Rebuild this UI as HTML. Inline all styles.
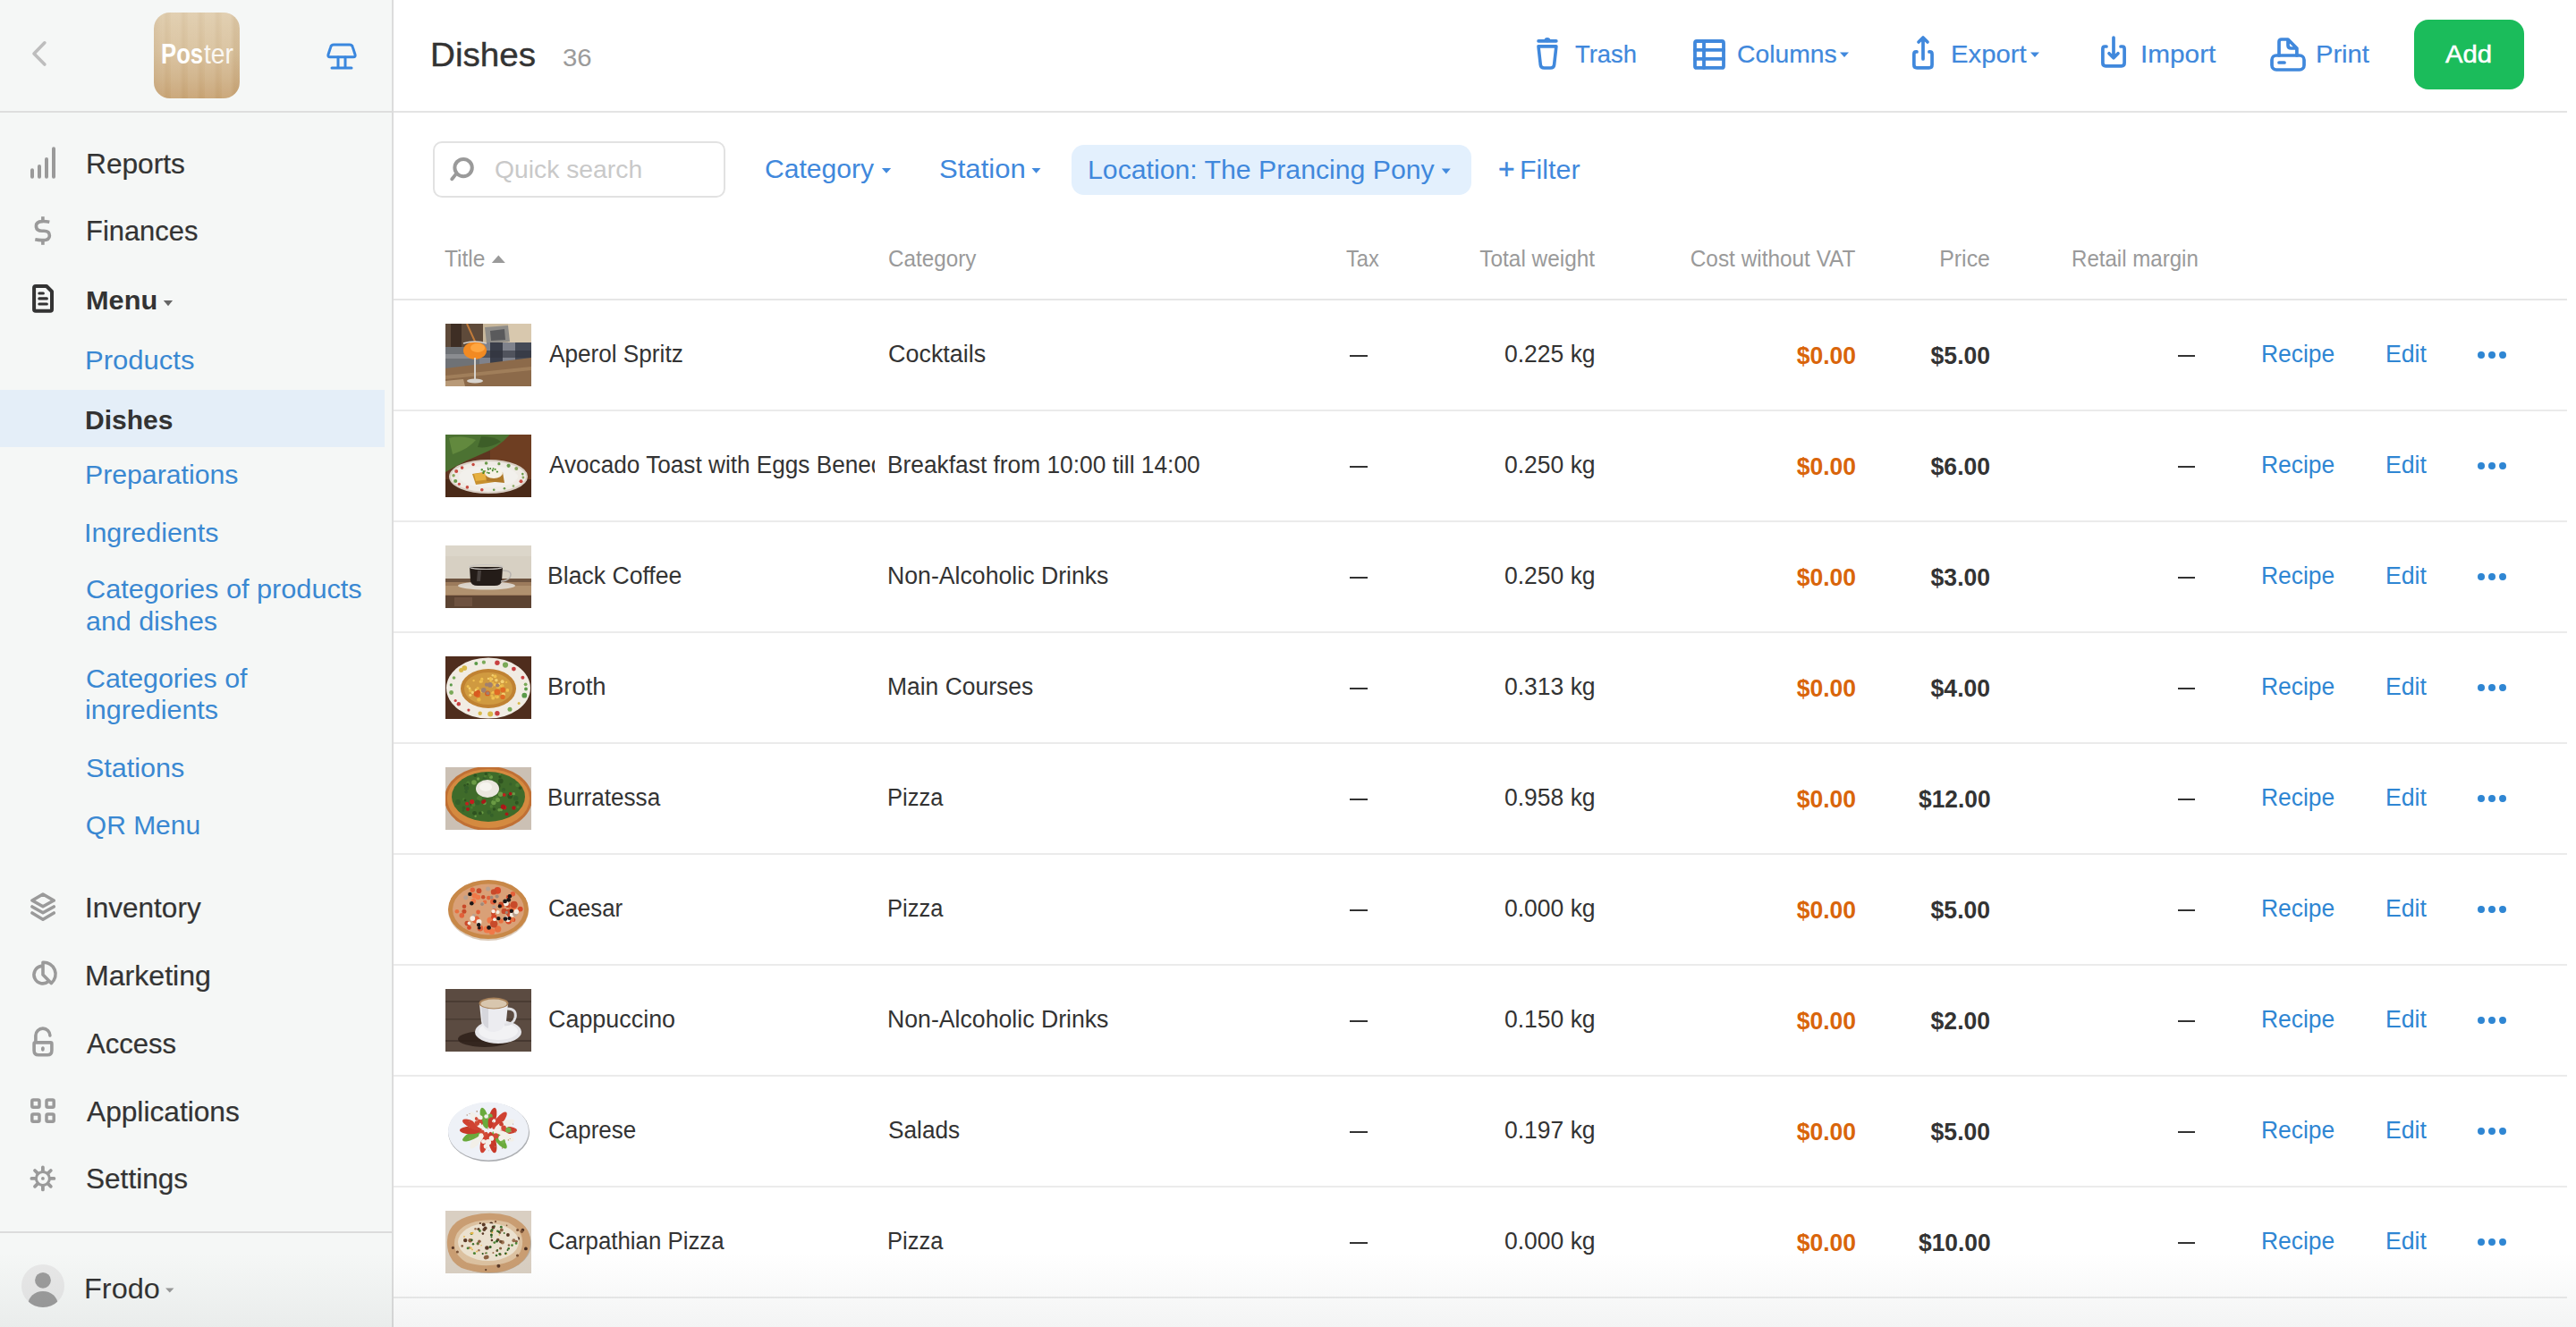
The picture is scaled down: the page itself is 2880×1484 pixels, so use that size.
<!DOCTYPE html>
<html><head><meta charset="utf-8"><title>Dishes</title>
<style>
html,body{margin:0;padding:0;background:#fff;}
body{width:2880px;height:1484px;overflow:hidden;font-family:"Liberation Sans", sans-serif;}
#page{position:relative;width:2880px;height:1484px;overflow:hidden;background:#fff;}
.t{position:absolute;white-space:nowrap;}
.r{position:absolute;}
.clip{position:absolute;overflow:hidden;}
.clip .t{position:absolute;}
svg.icons{position:absolute;left:0;top:0;width:2880px;height:1484px;}
.logo{border-radius:18px;background:
 repeating-linear-gradient(90deg, rgba(255,255,255,0.05) 0px, rgba(255,255,255,0.05) 10px, rgba(140,100,50,0.05) 14px, rgba(255,255,255,0) 19px),
 linear-gradient(90deg, rgba(150,110,60,0.10) 0%, rgba(150,110,60,0) 12%, rgba(150,110,60,0) 88%, rgba(150,110,60,0.10) 100%),
 linear-gradient(180deg,#e0cdae 0%,#d9c29e 45%,#cfb086 80%,#c8a475 100%);}
.fade{position:absolute;left:0;top:1400px;width:2880px;height:84px;background:linear-gradient(180deg,rgba(20,40,40,0) 0%,rgba(20,40,40,0.018) 40%,rgba(20,40,40,0.05) 100%);}
.th{overflow:hidden;}
.th0{background:
 radial-gradient(ellipse 9px 8px at 38% 45%, #ff9a2a 0%, #f28a20 60%, rgba(240,130,30,0) 100%),
 linear-gradient(90deg, rgba(0,0,0,0) 43%, rgba(230,230,235,0.55) 45%, rgba(230,230,235,0.55) 47%, rgba(0,0,0,0) 49%),
 linear-gradient(180deg, rgba(0,0,0,0) 0%, rgba(0,0,0,0) 75%, #a27c58 76%, #8f6c4c 100%),
 linear-gradient(90deg, rgba(0,0,0,0) 0%, rgba(0,0,0,0) 50%, #7c8494 50%, #4c5464 75%, #8a909a 100%) 0 24px / 100% 22px no-repeat,
 linear-gradient(90deg, #6d5b4b 0%, #5c4a3c 30%, #cdbda5 62%, #d4c4ac 100%) 0 0 / 100% 24px no-repeat,
 linear-gradient(180deg, #5a4a3e 0%, #5f5a56 40%, #7a6858 70%, #8c6c4e 100%);}
.th1{background:
 radial-gradient(ellipse 14px 8px at 52% 64%, #e8a838 0%, #d89a40 55%, rgba(220,160,60,0) 100%),
 radial-gradient(ellipse 44px 21px at 50% 66%, #f4f2ee 0%, #ece8e2 78%, #d8cfc6 92%, rgba(120,60,30,0) 100%),
 linear-gradient(160deg, #3f5a2c 0%, #557a3a 30%, rgba(80,100,50,0) 45%),
 linear-gradient(180deg, #5a3a22 0%, #6e4024 50%, #4e2e1c 100%);}
.th2{background:
 radial-gradient(ellipse 19px 9px at 48% 50%, #1e1814 0%, #2a211c 70%, rgba(40,30,25,0) 100%),
 radial-gradient(ellipse 34px 5px at 52% 66%, rgba(230,225,220,0.8) 0%, rgba(230,225,220,0) 100%),
 linear-gradient(180deg, #d7d0c3 0%, #cfc6b6 55%, #8c6e52 60%, #a8896a 72%, #6e543e 86%, #5a4030 100%);}
.th3{background:
 radial-gradient(ellipse 30px 21px at 50% 50%, #c88834 0%, #b8782a 55%, #c89a50 75%, rgba(200,150,80,0) 82%),
 radial-gradient(ellipse 48px 33px at 50% 50%, #f2ece4 0%, #ebe4da 85%, rgba(90,50,30,0) 100%),
 linear-gradient(180deg, #5a3422 0%, #4e2e1e 100%);}
.th4{background:
 radial-gradient(ellipse 13px 11px at 50% 45%, #f0ece4 0%, #e6e0d6 70%, rgba(200,200,190,0) 100%),
 radial-gradient(ellipse 36px 24px at 50% 46%, #4e7a30 0%, #3e6a28 60%, rgba(70,110,40,0) 100%),
 radial-gradient(ellipse 50px 34px at 50% 48%, #c8743a 0%, #c06a30 80%, rgba(190,110,60,0) 100%),
 linear-gradient(180deg, #c9bfb4 0%, #bfb2a4 100%);}
.th5{background:
 radial-gradient(ellipse 44px 31px at 50% 55%, #d89a6a 0%, #c86a40 55%, #c88848 85%, #b87838 92%, rgba(255,255,255,0) 100%),
 #ffffff;}
.th6{background:
 radial-gradient(ellipse 17px 9px at 59% 33%, #d9cbb8 0%, #c4aa88 70%, #9a7048 90%, rgba(150,110,70,0) 100%),
 radial-gradient(ellipse 17px 15px at 59% 50%, #f4f4f6 0%, #e6e6ea 70%, rgba(220,220,225,0) 100%),
 radial-gradient(ellipse 28px 14px at 56% 66%, #f0f0f2 0%, #e2e2e6 80%, rgba(200,200,205,0) 100%),
 radial-gradient(ellipse 30px 12px at 45% 78%, rgba(20,12,8,0.7) 0%, rgba(20,12,8,0) 100%),
 linear-gradient(180deg, #5e4e44 0%, #54463c 100%);}
.th7{background:
 radial-gradient(ellipse 26px 19px at 50% 56%, #c8584a 0%, #c0604a 40%, #a8b070 60%, rgba(230,230,225,0) 100%),
 radial-gradient(ellipse 46px 33px at 50% 55%, #f2f4f8 0%, #e8ecf2 85%, #c8ccd2 95%, rgba(255,255,255,0) 100%),
 #ffffff;}
.th8{background:
 radial-gradient(ellipse 40px 26px at 50% 50%, #ece4d8 0%, #e0d4c0 55%, #c89a70 78%, #9a6a48 92%, rgba(200,180,160,0) 100%),
 linear-gradient(180deg, #d6cbbd 0%, #cfc2b2 100%);}

@media (max-width: 1800px) {
 html,body{width:1440px;height:742px;}
 #page{zoom:0.5;}
}

</style></head><body>
<div id="page">
<div class="r" style="left:0px;top:0px;width:438px;height:1484px;background:#f5f7f6;"></div>
<div class="r" style="left:438px;top:0px;width:2px;height:1484px;background:#dcdcdc;"></div>
<div class="r" style="left:0px;top:124px;width:438px;height:2px;background:#dedede;"></div>
<div class="r" style="left:440px;top:124px;width:2430px;height:2px;background:#e4e4e4;"></div>
<div class="r logo" style="left:172px;top:14px;width:96px;height:96px;"></div>
<div class="t" style="left:180.17px;transform-origin:0 0;top:41.02px;font-size:30.5px;line-height:38px;color:#fff;font-weight:700;transform:scaleX(0.8422);">Pos</div>
<div class="t" style="left:228.29px;transform-origin:0 0;top:41.02px;font-size:30.5px;line-height:38px;color:rgba(255,255,255,0.9);transform:scaleX(0.9249);font-weight:300;">ter</div>
<div class="t" style="left:95.95px;transform-origin:0 0;top:163.72px;font-size:30.5px;line-height:38px;color:#333333;transform:scaleX(1.0388);-webkit-text-stroke:0.2px #333;">Reports</div>
<div class="t" style="left:96.02px;transform-origin:0 0;top:239.32px;font-size:30.5px;line-height:38px;color:#333333;transform:scaleX(1.0133);-webkit-text-stroke:0.2px #333;">Finances</div>
<div class="t" style="left:95.87px;transform-origin:0 0;top:317.07px;font-size:29.5px;line-height:37px;color:#333333;font-weight:700;transform:scaleX(1.0410);">Menu</div>
<div class="r" style="left:0px;top:436px;width:430px;height:64px;background:#e4eef8;"></div>
<div class="t" style="left:94.62px;transform-origin:0 0;top:384.20px;font-size:30px;line-height:38px;color:#3a88d2;transform:scaleX(1.0340);">Products</div>
<div class="t" style="left:94.68px;transform-origin:0 0;top:512.30px;font-size:30px;line-height:38px;color:#3a88d2;transform:scaleX(1.0078);">Preparations</div>
<div class="t" style="left:94.36px;transform-origin:0 0;top:576.60px;font-size:30px;line-height:38px;color:#3a88d2;transform:scaleX(1.0131);">Ingredients</div>
<div class="t" style="left:95.67px;transform-origin:0 0;top:639.90px;font-size:30px;line-height:38px;color:#3a88d2;transform:scaleX(1.0227);">Categories of products</div>
<div class="t" style="left:95.88px;transform-origin:0 0;top:675.70px;font-size:30px;line-height:38px;color:#3a88d2;transform:scaleX(1.0133);">and dishes</div>
<div class="t" style="left:95.68px;transform-origin:0 0;top:739.50px;font-size:30px;line-height:38px;color:#3a88d2;transform:scaleX(1.0113);">Categories of</div>
<div class="t" style="left:95.17px;transform-origin:0 0;top:775.30px;font-size:30px;line-height:38px;color:#3a88d2;transform:scaleX(1.0153);">ingredients</div>
<div class="t" style="left:95.77px;transform-origin:0 0;top:839.80px;font-size:30px;line-height:38px;color:#3a88d2;transform:scaleX(1.0179);">Stations</div>
<div class="t" style="left:95.80px;transform-origin:0 0;top:904.10px;font-size:30px;line-height:38px;color:#3a88d2;">QR Menu</div>
<div class="t" style="left:95.11px;transform-origin:0 0;top:451.37px;font-size:29.5px;line-height:37px;color:#333333;font-weight:700;transform:scaleX(1.0171);">Dishes</div>
<div class="t" style="left:94.55px;transform-origin:0 0;top:996.02px;font-size:30.5px;line-height:38px;color:#333333;transform:scaleX(1.0334);-webkit-text-stroke:0.2px #333;">Inventory</div>
<div class="t" style="left:94.82px;transform-origin:0 0;top:1071.92px;font-size:30.5px;line-height:38px;color:#333333;transform:scaleX(1.0526);-webkit-text-stroke:0.2px #333;">Marketing</div>
<div class="t" style="left:97.35px;transform-origin:0 0;top:1147.92px;font-size:30.5px;line-height:38px;color:#333333;transform:scaleX(1.0185);-webkit-text-stroke:0.2px #333;">Access</div>
<div class="t" style="left:97.34px;transform-origin:0 0;top:1223.92px;font-size:30.5px;line-height:38px;color:#333333;transform:scaleX(1.0386);-webkit-text-stroke:0.2px #333;">Applications</div>
<div class="t" style="left:96.00px;transform-origin:0 0;top:1299.12px;font-size:30.5px;line-height:38px;color:#333333;transform:scaleX(1.0353);-webkit-text-stroke:0.2px #333;">Settings</div>
<div class="r" style="left:0px;top:1377px;width:438px;height:2px;background:#dcdcdc;"></div>
<div class="t" style="left:93.58px;transform-origin:0 0;top:1421.75px;font-size:31px;line-height:39px;color:#333333;transform:scaleX(1.0480);">Frodo</div>
<div class="t" style="left:481.20px;transform-origin:0 0;top:39.45px;font-size:36.2px;line-height:45px;color:#333333;transform:scaleX(1.0667);-webkit-text-stroke:0.4px #333;">Dishes</div>
<div class="t" style="left:628.85px;transform-origin:0 0;top:46.79px;font-size:28px;line-height:35px;color:#9b9b9b;transform:scaleX(1.0484);">36</div>
<div class="t" style="left:1761.41px;transform-origin:0 0;top:43.09px;font-size:28px;line-height:35px;color:#4088dc;transform:scaleX(0.9765);-webkit-text-stroke:0.2px #4088dc;">Trash</div>
<div class="t" style="left:1941.98px;transform-origin:0 0;top:43.09px;font-size:28px;line-height:35px;color:#4088dc;transform:scaleX(1.0111);-webkit-text-stroke:0.2px #4088dc;">Columns</div>
<div class="t" style="left:2180.59px;transform-origin:0 0;top:43.09px;font-size:28px;line-height:35px;color:#4088dc;transform:scaleX(1.0459);-webkit-text-stroke:0.2px #4088dc;">Export</div>
<div class="t" style="left:2392.84px;transform-origin:0 0;top:43.09px;font-size:28px;line-height:35px;color:#4088dc;transform:scaleX(1.0627);-webkit-text-stroke:0.2px #4088dc;">Import</div>
<div class="t" style="left:2589.31px;transform-origin:0 0;top:43.09px;font-size:28px;line-height:35px;color:#4088dc;transform:scaleX(1.0399);-webkit-text-stroke:0.2px #4088dc;">Print</div>
<div class="r" style="left:2699px;top:22px;width:123px;height:78px;background:#1bbc5b;border-radius:16px;"></div>
<div class="t" style="left:2734.44px;transform-origin:0 0;top:44.06px;font-size:27.5px;line-height:34px;color:#ffffff;transform:scaleX(1.0638);-webkit-text-stroke:0.5px #fff;">Add</div>
<div class="r" style="left:484px;top:158px;width:327px;height:63px;border:2px solid #e2e2e2;border-radius:10px;box-sizing:border-box;background:#fff;"></div>
<div class="t" style="left:553.19px;transform-origin:0 0;top:172.49px;font-size:28px;line-height:35px;color:#c9c9c9;transform:scaleX(1.0106);">Quick search</div>
<div class="t" style="left:855.10px;transform-origin:0 0;top:170.30px;font-size:30px;line-height:38px;color:#4088dc;transform:scaleX(1.0025);">Category</div>
<div class="t" style="left:1049.95px;transform-origin:0 0;top:170.30px;font-size:30px;line-height:38px;color:#4088dc;transform:scaleX(1.0356);">Station</div>
<div class="r" style="left:1198px;top:162px;width:447px;height:56px;background:#e3f0fd;border-radius:14px;"></div>
<div class="t" style="left:1215.98px;transform-origin:0 0;top:170.60px;font-size:30px;line-height:38px;color:#4088dc;transform:scaleX(1.0079);">Location: The Prancing Pony</div>
<div class="t" style="left:1674.81px;transform-origin:0 0;top:169.40px;font-size:32px;line-height:40px;color:#4088dc;transform:scaleX(0.9935);-webkit-text-stroke:0.4px #4088dc;">+</div>
<div class="t" style="left:1699.16px;transform-origin:0 0;top:170.60px;font-size:30px;line-height:38px;color:#4088dc;transform:scaleX(1.0141);">Filter</div>
<div class="t" style="left:497.41px;transform-origin:0 0;top:274.33px;font-size:25px;line-height:31px;color:#9a9a9a;transform:scaleX(0.9821);">Title</div>
<div class="t" style="left:992.74px;transform-origin:0 0;top:274.33px;font-size:25px;line-height:31px;color:#9a9a9a;transform:scaleX(0.9700);">Category</div>
<div class="t" style="left:1505.43px;transform-origin:0 0;top:274.33px;font-size:25px;line-height:31px;color:#9a9a9a;transform:scaleX(0.9474);">Tax</div>
<div class="t" style="right:1097.39px;transform-origin:100% 0;top:274.33px;font-size:25px;line-height:31px;color:#9a9a9a;transform:scaleX(0.9749);">Total weight</div>
<div class="t" style="right:805.60px;transform-origin:100% 0;top:274.33px;font-size:25px;line-height:31px;color:#9a9a9a;transform:scaleX(0.9749);">Cost without VAT</div>
<div class="t" style="right:654.65px;transform-origin:100% 0;top:274.33px;font-size:25px;line-height:31px;color:#9a9a9a;transform:scaleX(0.9963);">Price</div>
<div class="t" style="left:2315.87px;transform-origin:0 0;top:274.33px;font-size:25px;line-height:31px;color:#9a9a9a;transform:scaleX(0.9631);">Retail margin</div>
<div class="r" style="left:440px;top:334px;width:2430px;height:2px;background:#e6e6e6;"></div>
<div class="r th" style="left:498px;top:362px;width:96px;height:70px;"><svg width="96" height="70" viewBox="0 0 96 70"><rect width="96" height="70" fill="#4d3d31"/>
<rect x="0" y="0" width="42" height="26" fill="#5e4a3a"/><rect x="6" y="0" width="12" height="30" fill="#3e2e24"/>
<rect x="42" y="0" width="54" height="22" fill="#c9b89c"/><rect x="70" y="0" width="26" height="22" fill="#d8c8ae"/>
<path d="M44,4 L70,2 L72,20 L46,22 Z" fill="#8e8c88"/><path d="M50,8 L66,6 L67,18 L51,19 Z" fill="#5a5a5c"/>
<rect x="36" y="21" width="60" height="26" fill="#7f828c"/>
<rect x="50" y="21" width="14" height="26" fill="#3a3e4a"/><rect x="78" y="21" width="18" height="26" fill="#454a56"/>
<rect x="36" y="30" width="60" height="8" fill="#30343e" opacity="0.6"/>
<rect x="0" y="26" width="38" height="24" fill="#6f7276"/><rect x="0" y="34" width="30" height="5" fill="#8a8c90"/>
<path d="M0,50 L96,38 L96,70 L0,70 Z" fill="#8c6a4a"/><path d="M0,58 L96,48 L96,52 L0,62 Z" fill="#a07e5a"/>
<path d="M0,64 L20,62 L22,70 L0,70 Z" fill="#b89a78"/>
<line x1="24" y1="0" x2="34" y2="22" stroke="#c07a3a" stroke-width="2"/>
<ellipse cx="33" cy="30" rx="13" ry="10" fill="#f28a22"/><ellipse cx="36" cy="27" rx="8" ry="5" fill="#ffa640"/>
<path d="M20,22 Q33,18 46,22" stroke="#d8d0c8" stroke-width="1.5" fill="none"/>
<rect x="32" y="38" width="2" height="25" fill="#d6d2cc"/><ellipse cx="33" cy="64" rx="9" ry="2.5" fill="#d8d4ce"/></svg></div>
<div class="clip" style="left:600px;top:362px;width:378px;height:70px;">
<div class="t" style="left:14.20px;transform-origin:0 0;top:16.84px;font-size:27px;line-height:34px;color:#333333;transform:scaleX(0.9687);">Aperol Spritz</div>
</div>
<div class="t" style="left:992.80px;transform-origin:0 0;top:378.84px;font-size:27px;line-height:34px;color:#333333;transform:scaleX(0.9972);">Cocktails</div>
<div class="r" style="left:1509px;top:396.7px;width:20px;height:2.1999999999999886px;background:#333333;"></div>
<div class="t" style="right:1096.35px;transform-origin:100% 0;top:378.84px;font-size:27px;line-height:34px;color:#333333;transform:scaleX(0.9802);">0.225 kg</div>
<div class="t" style="right:804.99px;transform-origin:100% 0;top:380.09px;font-size:28px;line-height:35px;color:#d9650b;font-weight:700;transform:scaleX(0.9474);">$0.00</div>
<div class="t" style="right:654.59px;transform-origin:100% 0;top:380.09px;font-size:28px;line-height:35px;color:#333333;font-weight:700;transform:scaleX(0.9489);">$5.00</div>
<div class="r" style="left:2435px;top:396.7px;width:19px;height:2.1999999999999886px;background:#333333;"></div>
<div class="t" style="left:2528.15px;transform-origin:0 0;top:378.84px;font-size:27px;line-height:34px;color:#2f86d3;transform:scaleX(0.9789);">Recipe</div>
<div class="t" style="left:2667.33px;transform-origin:0 0;top:378.84px;font-size:27px;line-height:34px;color:#2f86d3;transform:scaleX(0.9864);">Edit</div>
<div class="r" style="left:2770.3px;top:393.3px;width:7.8px;height:7.8px;border-radius:50%;background:#2f86d3;"></div>
<div class="r" style="left:2782.3px;top:393.3px;width:7.8px;height:7.8px;border-radius:50%;background:#2f86d3;"></div>
<div class="r" style="left:2794.3px;top:393.3px;width:7.8px;height:7.8px;border-radius:50%;background:#2f86d3;"></div>
<div class="r" style="left:440px;top:458px;width:2430px;height:2px;background:#ebebeb;"></div>
<div class="r th" style="left:498px;top:486px;width:96px;height:70px;"><svg width="96" height="70" viewBox="0 0 96 70"><rect width="96" height="70" fill="#5e3520"/><rect x="50" y="0" width="46" height="70" fill="#6e3e22"/>
<rect x="0" y="50" width="96" height="20" fill="#4a2a18"/>
<path d="M0,0 L72,0 Q60,14 40,22 Q20,30 0,42 Z" fill="#4c7232"/>
<path d="M4,4 Q20,0 34,6 Q26,16 8,22 Z" fill="#62893e"/><path d="M40,2 Q56,2 62,8 Q48,16 36,14 Z" fill="#3d5e28"/>
<ellipse cx="48" cy="47" rx="43" ry="18" fill="#efebe5"/>
<ellipse cx="48" cy="47" rx="43" ry="18" fill="none" stroke="#d9cfc4" stroke-width="2"/>
<circle cx="86.9" cy="48.0" r="1.4" fill="#8aa860"/><circle cx="84.5" cy="52.3" r="2.0" fill="#c84a40"/><circle cx="76.0" cy="57.5" r="1.3" fill="#8aa860"/><circle cx="66.0" cy="60.3" r="1.3" fill="#6a9a4a"/><circle cx="54.2" cy="61.8" r="1.3" fill="#6a9a4a"/><circle cx="40.8" cy="61.7" r="1.8" fill="#c84a40"/><circle cx="24.4" cy="58.9" r="1.8" fill="#c84a40"/><circle cx="15.4" cy="55.3" r="1.6" fill="#c84a40"/><circle cx="11.2" cy="52.0" r="2.1" fill="#6a9a4a"/><circle cx="9.1" cy="45.7" r="1.7" fill="#8aa860"/><circle cx="12.2" cy="41.0" r="2.0" fill="#c84a40"/><circle cx="18.6" cy="37.1" r="1.8" fill="#c84a40"/><circle cx="31.1" cy="33.5" r="1.7" fill="#c84a40"/><circle cx="45.6" cy="32.0" r="1.8" fill="#6a9a4a"/><circle cx="59.9" cy="32.7" r="1.6" fill="#6a9a4a"/><circle cx="70.6" cy="34.8" r="2.1" fill="#6a9a4a"/><circle cx="79.3" cy="38.1" r="2.0" fill="#8aa860"/><circle cx="86.3" cy="44.1" r="1.3" fill="#6a9a4a"/>
<ellipse cx="48" cy="47" rx="33" ry="12" fill="#f2f0ec"/>
<path d="M30,44 L56,40 L62,52 L34,56 Z" fill="#c8902e"/><path d="M32,44 L54,41 L58,49 L34,52 Z" fill="#e6b040"/>
<path d="M44,40 L64,42 L66,54 L46,52 Z" fill="#b07a2a"/>
<ellipse cx="54" cy="43" rx="10" ry="6" fill="#f6f2e6"/>
<circle cx="40.8" cy="39.3" r="1.2" fill="#5a9a3a"/><circle cx="47.9" cy="39.1" r="1.0" fill="#3c7a2a"/><circle cx="50.2" cy="38.1" r="1.0" fill="#3c7a2a"/><circle cx="52.7" cy="39.7" r="1.0" fill="#5a9a3a"/><circle cx="46.8" cy="42.5" r="1.0" fill="#5a9a3a"/><circle cx="52.8" cy="40.6" r="0.8" fill="#3c7a2a"/><circle cx="57.8" cy="41.6" r="1.1" fill="#5a9a3a"/><circle cx="48.7" cy="43.0" r="1.1" fill="#3c7a2a"/><circle cx="55.6" cy="38.9" r="1.1" fill="#5a9a3a"/><circle cx="58.2" cy="41.6" r="0.7" fill="#3c7a2a"/><circle cx="42.3" cy="42.9" r="1.0" fill="#3c7a2a"/><circle cx="43.0" cy="41.2" r="1.3" fill="#5a9a3a"/><circle cx="53.5" cy="38.0" r="0.9" fill="#5a9a3a"/><circle cx="47.5" cy="37.2" r="0.8" fill="#3c7a2a"/></svg></div>
<div class="clip" style="left:600px;top:486px;width:378px;height:70px;">
<div class="t" style="left:14.20px;transform-origin:0 0;top:16.84px;font-size:27px;line-height:34px;color:#333333;transform:scaleX(0.9692);">Avocado Toast with Eggs Benedict</div>
</div>
<div class="t" style="left:992.06px;transform-origin:0 0;top:502.84px;font-size:27px;line-height:34px;color:#333333;transform:scaleX(0.9750);">Breakfast from 10:00 till 14:00</div>
<div class="r" style="left:1509px;top:520.7px;width:20px;height:2.199999999999932px;background:#333333;"></div>
<div class="t" style="right:1096.35px;transform-origin:100% 0;top:502.84px;font-size:27px;line-height:34px;color:#333333;transform:scaleX(0.9802);">0.250 kg</div>
<div class="t" style="right:804.99px;transform-origin:100% 0;top:504.09px;font-size:28px;line-height:35px;color:#d9650b;font-weight:700;transform:scaleX(0.9474);">$0.00</div>
<div class="t" style="right:654.59px;transform-origin:100% 0;top:504.09px;font-size:28px;line-height:35px;color:#333333;font-weight:700;transform:scaleX(0.9489);">$6.00</div>
<div class="r" style="left:2435px;top:520.7px;width:19px;height:2.199999999999932px;background:#333333;"></div>
<div class="t" style="left:2528.15px;transform-origin:0 0;top:502.84px;font-size:27px;line-height:34px;color:#2f86d3;transform:scaleX(0.9789);">Recipe</div>
<div class="t" style="left:2667.33px;transform-origin:0 0;top:502.84px;font-size:27px;line-height:34px;color:#2f86d3;transform:scaleX(0.9864);">Edit</div>
<div class="r" style="left:2770.3px;top:517.3px;width:7.8px;height:7.8px;border-radius:50%;background:#2f86d3;"></div>
<div class="r" style="left:2782.3px;top:517.3px;width:7.8px;height:7.8px;border-radius:50%;background:#2f86d3;"></div>
<div class="r" style="left:2794.3px;top:517.3px;width:7.8px;height:7.8px;border-radius:50%;background:#2f86d3;"></div>
<div class="r" style="left:440px;top:582px;width:2430px;height:2px;background:#ebebeb;"></div>
<div class="r th" style="left:498px;top:610px;width:96px;height:70px;"><svg width="96" height="70" viewBox="0 0 96 70"><rect width="96" height="70" fill="#d7d0c3"/>
<rect x="0" y="0" width="96" height="12" fill="#dcd6ca"/>
<rect x="0" y="37" width="96" height="33" fill="#9c7b5c"/>
<rect x="0" y="37" width="96" height="4" fill="#6e5440"/>
<rect x="0" y="45" width="96" height="10" fill="#b0916f"/>
<rect x="0" y="56" width="96" height="14" fill="#5c4332"/><rect x="10" y="58" width="20" height="10" fill="#6e5240"/>
<ellipse cx="46" cy="45" rx="32" ry="4.5" fill="#e4e0da" opacity="0.85"/>
<path d="M27,24 L64,24 L63,40 Q62,45 55,45 L36,45 Q29,45 28,40 Z" fill="#241c18"/>
<ellipse cx="45.5" cy="24" rx="18.5" ry="2.5" fill="none" stroke="#c8c4c0" stroke-width="1.2"/>
<path d="M64,28 Q76,28 72,36 Q68,40 62,40" fill="none" stroke="#b8b4b0" stroke-width="1.5"/>
<path d="M36,28 L40,28 L39,40 L35,40 Z" fill="#5a5350" opacity="0.7"/></svg></div>
<div class="clip" style="left:600px;top:610px;width:378px;height:70px;">
<div class="t" style="left:12.13px;transform-origin:0 0;top:16.84px;font-size:27px;line-height:34px;color:#333333;transform:scaleX(0.9853);">Black Coffee</div>
</div>
<div class="t" style="left:992.03px;transform-origin:0 0;top:626.84px;font-size:27px;line-height:34px;color:#333333;transform:scaleX(0.9875);">Non-Alcoholic Drinks</div>
<div class="r" style="left:1509px;top:644.7px;width:20px;height:2.199999999999932px;background:#333333;"></div>
<div class="t" style="right:1096.35px;transform-origin:100% 0;top:626.84px;font-size:27px;line-height:34px;color:#333333;transform:scaleX(0.9802);">0.250 kg</div>
<div class="t" style="right:804.99px;transform-origin:100% 0;top:628.09px;font-size:28px;line-height:35px;color:#d9650b;font-weight:700;transform:scaleX(0.9474);">$0.00</div>
<div class="t" style="right:654.59px;transform-origin:100% 0;top:628.09px;font-size:28px;line-height:35px;color:#333333;font-weight:700;transform:scaleX(0.9489);">$3.00</div>
<div class="r" style="left:2435px;top:644.7px;width:19px;height:2.199999999999932px;background:#333333;"></div>
<div class="t" style="left:2528.15px;transform-origin:0 0;top:626.84px;font-size:27px;line-height:34px;color:#2f86d3;transform:scaleX(0.9789);">Recipe</div>
<div class="t" style="left:2667.33px;transform-origin:0 0;top:626.84px;font-size:27px;line-height:34px;color:#2f86d3;transform:scaleX(0.9864);">Edit</div>
<div class="r" style="left:2770.3px;top:641.3px;width:7.8px;height:7.8px;border-radius:50%;background:#2f86d3;"></div>
<div class="r" style="left:2782.3px;top:641.3px;width:7.8px;height:7.8px;border-radius:50%;background:#2f86d3;"></div>
<div class="r" style="left:2794.3px;top:641.3px;width:7.8px;height:7.8px;border-radius:50%;background:#2f86d3;"></div>
<div class="r" style="left:440px;top:706px;width:2430px;height:2px;background:#ebebeb;"></div>
<div class="r th" style="left:498px;top:734px;width:96px;height:70px;"><svg width="96" height="70" viewBox="0 0 96 70"><rect width="96" height="70" fill="#4f2d1d"/>
<ellipse cx="48" cy="35.5" rx="47" ry="34" fill="#f1ece3"/>
<circle cx="90.0" cy="36.5" r="1.9" fill="#5a9a48"/><circle cx="88.3" cy="43.7" r="2.9" fill="#5a9a48"/><circle cx="82.1" cy="52.4" r="1.5" fill="#d8b848"/><circle cx="72.0" cy="59.3" r="2.5" fill="#7aaa58"/><circle cx="57.9" cy="63.7" r="2.7" fill="#c84040"/><circle cx="50.2" cy="64.5" r="3.0" fill="#d8b848"/><circle cx="38.7" cy="63.8" r="2.2" fill="#d8b848"/><circle cx="25.9" cy="60.1" r="1.6" fill="#c84040"/><circle cx="14.8" cy="53.3" r="2.2" fill="#c84040"/><circle cx="11.2" cy="49.5" r="1.6" fill="#c84040"/><circle cx="6.6" cy="40.5" r="2.4" fill="#7aaa58"/><circle cx="6.3" cy="31.9" r="1.6" fill="#5a9a48"/><circle cx="9.5" cy="24.0" r="1.8" fill="#7aaa58"/><circle cx="17.6" cy="15.5" r="2.5" fill="#d8b848"/><circle cx="21.3" cy="13.1" r="2.9" fill="#d8b848"/><circle cx="34.3" cy="8.1" r="2.0" fill="#5a9a48"/><circle cx="42.9" cy="6.7" r="2.1" fill="#7aaa58"/><circle cx="57.9" cy="7.3" r="2.7" fill="#c84040"/><circle cx="67.0" cy="9.6" r="3.1" fill="#7aaa58"/><circle cx="76.4" cy="14.1" r="2.4" fill="#c84040"/><circle cx="86.4" cy="23.7" r="2.0" fill="#c84040"/><circle cx="89.6" cy="31.3" r="1.9" fill="#7aaa58"/>
<ellipse cx="48" cy="36" rx="31" ry="22" fill="#c08232"/>
<ellipse cx="48" cy="36" rx="27" ry="18" fill="#d09a40"/>
<circle cx="60.0" cy="30.8" r="1.3" fill="#f4d070"/><circle cx="50.5" cy="27.0" r="1.3" fill="#f0c050"/><circle cx="55.5" cy="22.4" r="1.9" fill="#f0c050"/><circle cx="53.2" cy="46.7" r="1.9" fill="#f0c050"/><circle cx="52.1" cy="25.4" r="1.2" fill="#f4d070"/><circle cx="63.5" cy="33.1" r="2.1" fill="#e8b848"/><circle cx="61.9" cy="33.3" r="1.3" fill="#f0c050"/><circle cx="34.3" cy="37.7" r="1.6" fill="#f4d070"/><circle cx="56.9" cy="26.7" r="1.8" fill="#f4d070"/><circle cx="64.8" cy="42.6" r="2.1" fill="#f4d070"/><circle cx="48.0" cy="24.9" r="1.2" fill="#f4d070"/><circle cx="37.4" cy="48.4" r="2.2" fill="#e8b848"/><circle cx="27.9" cy="39.2" r="1.1" fill="#f0c050"/><circle cx="52.1" cy="41.0" r="1.2" fill="#e8b848"/><circle cx="51.2" cy="30.3" r="2.0" fill="#e8b848"/><circle cx="40.2" cy="28.1" r="1.7" fill="#f0c050"/><circle cx="69.3" cy="37.9" r="1.9" fill="#f0c050"/><circle cx="25.1" cy="33.4" r="1.5" fill="#f0c050"/><circle cx="53.1" cy="29.5" r="1.3" fill="#e8b848"/><circle cx="27.0" cy="35.9" r="1.4" fill="#f4d070"/><circle cx="40.4" cy="38.8" r="2.1" fill="#e8b848"/><circle cx="63.6" cy="28.2" r="2.0" fill="#f4d070"/><circle cx="27.8" cy="43.3" r="1.6" fill="#f4d070"/><circle cx="57.9" cy="45.3" r="2.0" fill="#f0c050"/><circle cx="31.6" cy="27.1" r="1.2" fill="#f0c050"/><circle cx="27.8" cy="38.3" r="1.7" fill="#e8b848"/><circle cx="40.8" cy="25.4" r="1.6" fill="#f0c050"/><circle cx="52.2" cy="33.4" r="1.2" fill="#f0c050"/><circle cx="50.4" cy="24.7" r="1.7" fill="#f0c050"/><circle cx="30.4" cy="40.4" r="1.6" fill="#f4d070"/><circle cx="51.9" cy="44.0" r="1.6" fill="#e8b848"/><circle cx="36.1" cy="35.6" r="1.6" fill="#e8b848"/><circle cx="68.1" cy="28.9" r="1.2" fill="#e8b848"/><circle cx="53.5" cy="40.2" r="1.5" fill="#f0c050"/><circle cx="40.5" cy="26.8" r="1.3" fill="#e8b848"/><circle cx="52.8" cy="21.2" r="1.2" fill="#f4d070"/><circle cx="39.0" cy="28.4" r="1.3" fill="#f0c050"/><circle cx="59.0" cy="34.5" r="2.1" fill="#e8b848"/><circle cx="55.3" cy="31.7" r="1.8" fill="#f0c050"/><circle cx="56.3" cy="44.9" r="1.6" fill="#e8b848"/><circle cx="36.4" cy="40.3" r="2.6" fill="#d85a20"/><circle cx="64.3" cy="37.4" r="2.9" fill="#e06a24"/><circle cx="36.2" cy="43.2" r="2.8" fill="#e06a24"/><circle cx="64.0" cy="45.4" r="2.7" fill="#e06a24"/><circle cx="57.9" cy="39.9" r="3.4" fill="#e06a24"/><circle cx="47.0" cy="41.4" r="2.9" fill="#d85a20"/><circle cx="34.6" cy="42.1" r="3.0" fill="#d85a20"/><circle cx="46.0" cy="31.7" r="2.1" fill="#a08070"/><circle cx="42.7" cy="37.8" r="2.9" fill="#a08070"/><circle cx="50.0" cy="31.9" r="2.9" fill="#a08070"/><circle cx="47.3" cy="41.2" r="2.0" fill="#a08070"/><circle cx="58.2" cy="32.5" r="2.1" fill="#a08070"/></svg></div>
<div class="clip" style="left:600px;top:734px;width:378px;height:70px;">
<div class="t" style="left:12.07px;transform-origin:0 0;top:16.84px;font-size:27px;line-height:34px;color:#333333;transform:scaleX(1.0149);">Broth</div>
</div>
<div class="t" style="left:992.05px;transform-origin:0 0;top:750.84px;font-size:27px;line-height:34px;color:#333333;transform:scaleX(0.9792);">Main Courses</div>
<div class="r" style="left:1509px;top:768.7px;width:20px;height:2.199999999999932px;background:#333333;"></div>
<div class="t" style="right:1096.35px;transform-origin:100% 0;top:750.84px;font-size:27px;line-height:34px;color:#333333;transform:scaleX(0.9802);">0.313 kg</div>
<div class="t" style="right:804.99px;transform-origin:100% 0;top:752.09px;font-size:28px;line-height:35px;color:#d9650b;font-weight:700;transform:scaleX(0.9474);">$0.00</div>
<div class="t" style="right:654.59px;transform-origin:100% 0;top:752.09px;font-size:28px;line-height:35px;color:#333333;font-weight:700;transform:scaleX(0.9489);">$4.00</div>
<div class="r" style="left:2435px;top:768.7px;width:19px;height:2.199999999999932px;background:#333333;"></div>
<div class="t" style="left:2528.15px;transform-origin:0 0;top:750.84px;font-size:27px;line-height:34px;color:#2f86d3;transform:scaleX(0.9789);">Recipe</div>
<div class="t" style="left:2667.33px;transform-origin:0 0;top:750.84px;font-size:27px;line-height:34px;color:#2f86d3;transform:scaleX(0.9864);">Edit</div>
<div class="r" style="left:2770.3px;top:765.3px;width:7.8px;height:7.8px;border-radius:50%;background:#2f86d3;"></div>
<div class="r" style="left:2782.3px;top:765.3px;width:7.8px;height:7.8px;border-radius:50%;background:#2f86d3;"></div>
<div class="r" style="left:2794.3px;top:765.3px;width:7.8px;height:7.8px;border-radius:50%;background:#2f86d3;"></div>
<div class="r" style="left:440px;top:830px;width:2430px;height:2px;background:#ebebeb;"></div>
<div class="r th" style="left:498px;top:858px;width:96px;height:70px;"><svg width="96" height="70" viewBox="0 0 96 70"><rect width="96" height="70" fill="#cbc0b4"/>
<ellipse cx="48" cy="35" rx="49" ry="36" fill="#c07034"/>
<ellipse cx="48" cy="35" rx="46" ry="33" fill="#d48a40"/>
<ellipse cx="48" cy="33" rx="41" ry="28" fill="#3f6b2a"/>
<circle cx="83.5" cy="23.3" r="1.7" fill="#2e5220"/><circle cx="54.5" cy="46.9" r="1.7" fill="#2e5220"/><circle cx="41.1" cy="50.8" r="1.5" fill="#6a9a44"/><circle cx="60.9" cy="8.5" r="1.3" fill="#4d7d32"/><circle cx="44.9" cy="13.8" r="1.5" fill="#35602a"/><circle cx="48.7" cy="50.4" r="2.4" fill="#35602a"/><circle cx="32.0" cy="17.0" r="2.8" fill="#6a9a44"/><circle cx="33.3" cy="9.2" r="1.8" fill="#2e5220"/><circle cx="29.0" cy="41.6" r="1.3" fill="#2e5220"/><circle cx="78.7" cy="34.8" r="2.8" fill="#35602a"/><circle cx="53.9" cy="39.5" r="2.7" fill="#6a9a44"/><circle cx="21.6" cy="20.4" r="1.3" fill="#2e5220"/><circle cx="62.3" cy="47.5" r="1.7" fill="#6a9a44"/><circle cx="76.4" cy="29.7" r="1.6" fill="#6a9a44"/><circle cx="51.3" cy="43.9" r="1.8" fill="#4d7d32"/><circle cx="20.7" cy="35.9" r="1.6" fill="#4d7d32"/><circle cx="77.7" cy="45.7" r="1.5" fill="#4d7d32"/><circle cx="31.2" cy="41.8" r="2.3" fill="#4d7d32"/><circle cx="23.6" cy="23.3" r="2.6" fill="#35602a"/><circle cx="51.0" cy="11.0" r="2.1" fill="#6a9a44"/><circle cx="42.9" cy="12.4" r="1.3" fill="#35602a"/><circle cx="44.4" cy="9.7" r="1.5" fill="#4d7d32"/><circle cx="61.8" cy="15.4" r="2.8" fill="#2e5220"/><circle cx="54.9" cy="35.7" r="2.3" fill="#4d7d32"/><circle cx="29.3" cy="45.2" r="1.3" fill="#4d7d32"/><circle cx="25.4" cy="17.7" r="2.1" fill="#4d7d32"/><circle cx="38.0" cy="34.8" r="2.9" fill="#4d7d32"/><circle cx="42.6" cy="27.4" r="2.5" fill="#6a9a44"/><circle cx="61.0" cy="10.7" r="1.6" fill="#2e5220"/><circle cx="51.8" cy="53.8" r="2.0" fill="#35602a"/><circle cx="81.0" cy="44.5" r="1.7" fill="#4d7d32"/><circle cx="24.8" cy="19.0" r="1.3" fill="#2e5220"/><circle cx="32.5" cy="51.3" r="2.4" fill="#2e5220"/><circle cx="57.6" cy="33.5" r="1.7" fill="#4d7d32"/><circle cx="36.6" cy="13.0" r="1.7" fill="#6a9a44"/><circle cx="22.0" cy="36.9" r="1.4" fill="#2e5220"/><circle cx="43.7" cy="40.1" r="2.1" fill="#6a9a44"/><circle cx="13.9" cy="39.0" r="2.9" fill="#35602a"/><circle cx="72.2" cy="32.4" r="2.8" fill="#2e5220"/><circle cx="58.5" cy="36.5" r="2.5" fill="#6a9a44"/><circle cx="61.6" cy="30.2" r="2.7" fill="#6a9a44"/><circle cx="72.8" cy="18.8" r="1.6" fill="#35602a"/><circle cx="35.8" cy="39.4" r="2.9" fill="#35602a"/><circle cx="20.4" cy="45.4" r="1.9" fill="#35602a"/><circle cx="33.6" cy="54.8" r="1.2" fill="#6a9a44"/><circle cx="55.2" cy="25.4" r="2.9" fill="#4d7d32"/><circle cx="65.1" cy="24.9" r="1.9" fill="#35602a"/><circle cx="19.9" cy="48.4" r="1.3" fill="#35602a"/><circle cx="49.3" cy="9.0" r="1.7" fill="#4d7d32"/><circle cx="58.6" cy="21.0" r="2.9" fill="#2e5220"/><circle cx="73.3" cy="29.9" r="1.8" fill="#6a9a44"/><circle cx="53.6" cy="16.4" r="1.3" fill="#35602a"/><circle cx="80.4" cy="19.9" r="2.2" fill="#4d7d32"/><circle cx="79.8" cy="39.8" r="2.0" fill="#2e5220"/><circle cx="35.2" cy="22.0" r="1.3" fill="#2e5220"/><circle cx="60.0" cy="47.7" r="1.7" fill="#6a9a44"/><circle cx="45.3" cy="7.4" r="1.7" fill="#2e5220"/><circle cx="38.9" cy="51.4" r="1.9" fill="#2e5220"/><circle cx="41.4" cy="27.4" r="2.1" fill="#35602a"/><circle cx="23.1" cy="27.6" r="1.8" fill="#35602a"/><circle cx="24.1" cy="40.8" r="2.0" fill="#c21e1e"/><circle cx="42.1" cy="39.1" r="2.0" fill="#a81818"/><circle cx="53.9" cy="23.0" r="1.8" fill="#a81818"/><circle cx="25.0" cy="46.9" r="2.0" fill="#a81818"/><circle cx="43.3" cy="38.1" r="2.1" fill="#a81818"/><circle cx="66.0" cy="45.1" r="2.4" fill="#c21e1e"/><circle cx="76.5" cy="45.5" r="2.2" fill="#a81818"/><circle cx="29.7" cy="38.6" r="2.6" fill="#c21e1e"/><circle cx="64.4" cy="44.2" r="2.6" fill="#a81818"/><circle cx="72.7" cy="29.7" r="1.9" fill="#a81818"/><circle cx="65.7" cy="30.9" r="1.9" fill="#c21e1e"/><circle cx="68.5" cy="52.3" r="1.9" fill="#a81818"/>
<ellipse cx="47" cy="24" rx="13" ry="10" fill="#ebe7df"/><ellipse cx="45" cy="22" rx="7" ry="5" fill="#f6f4ee"/></svg></div>
<div class="clip" style="left:600px;top:858px;width:378px;height:70px;">
<div class="t" style="left:12.17px;transform-origin:0 0;top:16.84px;font-size:27px;line-height:34px;color:#333333;transform:scaleX(0.9665);">Burratessa</div>
</div>
<div class="t" style="left:992.12px;transform-origin:0 0;top:874.84px;font-size:27px;line-height:34px;color:#333333;transform:scaleX(0.9451);">Pizza</div>
<div class="r" style="left:1509px;top:892.7px;width:20px;height:2.199999999999932px;background:#333333;"></div>
<div class="t" style="right:1096.35px;transform-origin:100% 0;top:874.84px;font-size:27px;line-height:34px;color:#333333;transform:scaleX(0.9802);">0.958 kg</div>
<div class="t" style="right:804.99px;transform-origin:100% 0;top:876.09px;font-size:28px;line-height:35px;color:#d9650b;font-weight:700;transform:scaleX(0.9474);">$0.00</div>
<div class="t" style="right:654.63px;transform-origin:100% 0;top:876.09px;font-size:28px;line-height:35px;color:#333333;font-weight:700;transform:scaleX(0.9417);">$12.00</div>
<div class="r" style="left:2435px;top:892.7px;width:19px;height:2.199999999999932px;background:#333333;"></div>
<div class="t" style="left:2528.15px;transform-origin:0 0;top:874.84px;font-size:27px;line-height:34px;color:#2f86d3;transform:scaleX(0.9789);">Recipe</div>
<div class="t" style="left:2667.33px;transform-origin:0 0;top:874.84px;font-size:27px;line-height:34px;color:#2f86d3;transform:scaleX(0.9864);">Edit</div>
<div class="r" style="left:2770.3px;top:889.3px;width:7.8px;height:7.8px;border-radius:50%;background:#2f86d3;"></div>
<div class="r" style="left:2782.3px;top:889.3px;width:7.8px;height:7.8px;border-radius:50%;background:#2f86d3;"></div>
<div class="r" style="left:2794.3px;top:889.3px;width:7.8px;height:7.8px;border-radius:50%;background:#2f86d3;"></div>
<div class="r" style="left:440px;top:954px;width:2430px;height:2px;background:#ebebeb;"></div>
<div class="r th" style="left:498px;top:982px;width:96px;height:70px;"><svg width="96" height="70" viewBox="0 0 96 70"><rect width="96" height="70" fill="#ffffff"/>
<ellipse cx="48" cy="36" rx="45" ry="34" fill="#9a6a3a" opacity="0.35"/>
<ellipse cx="48" cy="35" rx="45" ry="33" fill="#c88848"/>
<ellipse cx="48" cy="35" rx="40" ry="28.5" fill="#d9a077"/>
<circle cx="76.1" cy="46.7" r="2.2" fill="#d84828"/><circle cx="51.9" cy="59.8" r="3.5" fill="#f07848"/><circle cx="76.5" cy="30.2" r="3.3" fill="#c84a2a"/><circle cx="44.1" cy="26.7" r="2.3" fill="#e87040"/><circle cx="63.2" cy="31.0" r="2.7" fill="#e87040"/><circle cx="75.1" cy="35.1" r="4.2" fill="#f07848"/><circle cx="76.7" cy="29.7" r="4.0" fill="#c84a2a"/><circle cx="21.0" cy="31.8" r="2.3" fill="#c84a2a"/><circle cx="42.2" cy="21.2" r="2.2" fill="#c84a2a"/><circle cx="70.3" cy="21.2" r="2.4" fill="#d84828"/><circle cx="30.3" cy="13.3" r="2.7" fill="#e2603a"/><circle cx="37.5" cy="14.2" r="2.9" fill="#c84a2a"/><circle cx="58.6" cy="57.0" r="3.7" fill="#e87040"/><circle cx="71.7" cy="42.5" r="2.6" fill="#d84828"/><circle cx="50.1" cy="47.1" r="3.7" fill="#f07848"/><circle cx="70.6" cy="48.0" r="3.4" fill="#d84828"/><circle cx="12.9" cy="37.3" r="2.3" fill="#e87040"/><circle cx="62.1" cy="48.0" r="2.6" fill="#e87040"/><circle cx="53.3" cy="39.6" r="2.3" fill="#c84a2a"/><circle cx="18.3" cy="41.8" r="2.8" fill="#e2603a"/><circle cx="83.7" cy="34.6" r="2.9" fill="#d84828"/><circle cx="32.6" cy="19.6" r="3.1" fill="#f07848"/><circle cx="36.3" cy="21.3" r="2.9" fill="#f07848"/><circle cx="36.6" cy="38.0" r="2.4" fill="#e2603a"/><circle cx="26.5" cy="55.4" r="2.4" fill="#d84828"/><circle cx="24.3" cy="50.6" r="2.8" fill="#c84a2a"/><circle cx="74.5" cy="46.4" r="2.6" fill="#e87040"/><circle cx="62.2" cy="29.5" r="2.9" fill="#c84a2a"/><circle cx="71.3" cy="38.2" r="3.8" fill="#c84a2a"/><circle cx="54.7" cy="36.2" r="2.3" fill="#e2603a"/><circle cx="46.6" cy="57.5" r="4.0" fill="#f07848"/><circle cx="34.0" cy="46.4" r="4.1" fill="#e2603a"/><circle cx="45.6" cy="56.9" r="2.8" fill="#f07848"/><circle cx="38.8" cy="56.1" r="3.4" fill="#e2603a"/><circle cx="65.7" cy="36.9" r="3.2" fill="#c84a2a"/><circle cx="70.0" cy="30.4" r="2.7" fill="#c84a2a"/><circle cx="53.3" cy="26.3" r="3.2" fill="#e2603a"/><circle cx="58.3" cy="13.9" r="3.8" fill="#d84828"/><circle cx="31.4" cy="25.7" r="2.8" fill="#f07848"/><circle cx="54.0" cy="15.4" r="3.2" fill="#c84a2a"/><circle cx="48.3" cy="22.1" r="2.3" fill="#e2603a"/><circle cx="20.9" cy="37.2" r="2.5" fill="#c84a2a"/><circle cx="75.4" cy="17.7" r="2.7" fill="#e2603a"/><circle cx="54.2" cy="51.3" r="4.2" fill="#c84a2a"/><circle cx="54.3" cy="43.4" r="3.1" fill="#d84828"/><circle cx="47.6" cy="12.0" r="2.5" fill="#b8a090"/><circle cx="51.6" cy="21.7" r="1.9" fill="#a08878"/><circle cx="26.4" cy="50.4" r="1.8" fill="#f4ece0"/><circle cx="54.9" cy="46.2" r="1.9" fill="#f4ece0"/><circle cx="37.5" cy="49.0" r="3.0" fill="#f4ece0"/><circle cx="41.3" cy="28.6" r="2.2" fill="#b8a090"/><circle cx="67.9" cy="45.3" r="2.7" fill="#f8f0e8"/><circle cx="54.2" cy="32.4" r="1.9" fill="#b8a090"/><circle cx="74.5" cy="41.0" r="2.7" fill="#f4ece0"/><circle cx="67.9" cy="28.5" r="2.8" fill="#f8f0e8"/><circle cx="22.7" cy="21.7" r="2.5" fill="#b8a090"/><circle cx="69.9" cy="46.9" r="2.4" fill="#f4ece0"/><circle cx="68.4" cy="38.4" r="1.6" fill="#a08878"/><circle cx="77.9" cy="40.1" r="2.9" fill="#b8a090"/><circle cx="57.6" cy="20.5" r="2.1" fill="#a08878"/><circle cx="53.6" cy="37.1" r="2.2" fill="#f8f0e8"/><circle cx="58.6" cy="38.1" r="2.1" fill="#f4ece0"/><circle cx="41.0" cy="29.2" r="1.7" fill="#a08878"/><circle cx="31.8" cy="42.1" r="2.0" fill="#b8a090"/><circle cx="37.7" cy="52.4" r="2.0" fill="#f8f0e8"/><circle cx="79.3" cy="37.5" r="2.7" fill="#f4ece0"/><circle cx="30.3" cy="45.1" r="2.9" fill="#f8f0e8"/><circle cx="66.6" cy="25.9" r="2.4" fill="#1c1616"/><circle cx="29.3" cy="28.2" r="2.3" fill="#1c1616"/><circle cx="73.9" cy="36.7" r="2.2" fill="#1c1616"/><circle cx="71.4" cy="45.0" r="2.1" fill="#1c1616"/><circle cx="59.3" cy="45.1" r="2.2" fill="#1c1616"/><circle cx="67.0" cy="45.6" r="2.4" fill="#1c1616"/><circle cx="37.8" cy="55.8" r="1.8" fill="#1c1616"/><circle cx="37.2" cy="52.2" r="2.2" fill="#1c1616"/><circle cx="70.7" cy="24.3" r="2.4" fill="#1c1616"/><circle cx="27.4" cy="17.9" r="2.2" fill="#1c1616"/><circle cx="55.1" cy="26.0" r="2.0" fill="#1c1616"/><circle cx="60.8" cy="31.4" r="2.1" fill="#1c1616"/><circle cx="48.6" cy="55.4" r="2.4" fill="#1c1616"/><circle cx="71.9" cy="20.3" r="2.3" fill="#1c1616"/></svg></div>
<div class="clip" style="left:600px;top:982px;width:378px;height:70px;">
<div class="t" style="left:12.96px;transform-origin:0 0;top:16.84px;font-size:27px;line-height:34px;color:#333333;transform:scaleX(0.9554);">Caesar</div>
</div>
<div class="t" style="left:992.12px;transform-origin:0 0;top:998.84px;font-size:27px;line-height:34px;color:#333333;transform:scaleX(0.9451);">Pizza</div>
<div class="r" style="left:1509px;top:1016.7px;width:20px;height:2.199999999999932px;background:#333333;"></div>
<div class="t" style="right:1096.35px;transform-origin:100% 0;top:998.84px;font-size:27px;line-height:34px;color:#333333;transform:scaleX(0.9802);">0.000 kg</div>
<div class="t" style="right:804.99px;transform-origin:100% 0;top:1000.09px;font-size:28px;line-height:35px;color:#d9650b;font-weight:700;transform:scaleX(0.9474);">$0.00</div>
<div class="t" style="right:654.59px;transform-origin:100% 0;top:1000.09px;font-size:28px;line-height:35px;color:#333333;font-weight:700;transform:scaleX(0.9489);">$5.00</div>
<div class="r" style="left:2435px;top:1016.7px;width:19px;height:2.199999999999932px;background:#333333;"></div>
<div class="t" style="left:2528.15px;transform-origin:0 0;top:998.84px;font-size:27px;line-height:34px;color:#2f86d3;transform:scaleX(0.9789);">Recipe</div>
<div class="t" style="left:2667.33px;transform-origin:0 0;top:998.84px;font-size:27px;line-height:34px;color:#2f86d3;transform:scaleX(0.9864);">Edit</div>
<div class="r" style="left:2770.3px;top:1013.3px;width:7.8px;height:7.8px;border-radius:50%;background:#2f86d3;"></div>
<div class="r" style="left:2782.3px;top:1013.3px;width:7.8px;height:7.8px;border-radius:50%;background:#2f86d3;"></div>
<div class="r" style="left:2794.3px;top:1013.3px;width:7.8px;height:7.8px;border-radius:50%;background:#2f86d3;"></div>
<div class="r" style="left:440px;top:1078px;width:2430px;height:2px;background:#ebebeb;"></div>
<div class="r th" style="left:498px;top:1106px;width:96px;height:70px;"><svg width="96" height="70" viewBox="0 0 96 70"><rect width="96" height="70" fill="#5b4b41"/>
<rect x="0" y="13" width="96" height="2" fill="#4a3c33"/><rect x="0" y="33" width="96" height="1.5" fill="#4a3c33"/><rect x="0" y="57" width="96" height="2" fill="#463830"/>
<ellipse cx="44" cy="56" rx="30" ry="9" fill="#2a1d16" opacity="0.8"/>
<ellipse cx="59" cy="48" rx="26" ry="13" fill="#e6e6ea"/><ellipse cx="59" cy="47" rx="22" ry="10" fill="#f2f2f4"/>
<path d="M38,16 L70,16 L68,36 Q64,48 54,48 Q42,48 40,36 Z" fill="#ececf0"/>
<path d="M40,20 L48,20 L48,44 Q42,42 41,34 Z" fill="#d6d6dc"/>
<path d="M69,22 Q80,22 78,32 Q76,40 66,40" fill="none" stroke="#e0e0e4" stroke-width="3"/>
<ellipse cx="54" cy="16" rx="16.5" ry="6.5" fill="#a8825a"/><ellipse cx="54" cy="16.5" rx="14.5" ry="5" fill="#d8c6ae"/></svg></div>
<div class="clip" style="left:600px;top:1106px;width:378px;height:70px;">
<div class="t" style="left:12.90px;transform-origin:0 0;top:16.84px;font-size:27px;line-height:34px;color:#333333;transform:scaleX(0.9964);">Cappuccino</div>
</div>
<div class="t" style="left:992.03px;transform-origin:0 0;top:1122.84px;font-size:27px;line-height:34px;color:#333333;transform:scaleX(0.9875);">Non-Alcoholic Drinks</div>
<div class="r" style="left:1509px;top:1140.7px;width:20px;height:2.2000000000000455px;background:#333333;"></div>
<div class="t" style="right:1096.35px;transform-origin:100% 0;top:1122.84px;font-size:27px;line-height:34px;color:#333333;transform:scaleX(0.9802);">0.150 kg</div>
<div class="t" style="right:804.99px;transform-origin:100% 0;top:1124.09px;font-size:28px;line-height:35px;color:#d9650b;font-weight:700;transform:scaleX(0.9474);">$0.00</div>
<div class="t" style="right:654.59px;transform-origin:100% 0;top:1124.09px;font-size:28px;line-height:35px;color:#333333;font-weight:700;transform:scaleX(0.9489);">$2.00</div>
<div class="r" style="left:2435px;top:1140.7px;width:19px;height:2.2000000000000455px;background:#333333;"></div>
<div class="t" style="left:2528.15px;transform-origin:0 0;top:1122.84px;font-size:27px;line-height:34px;color:#2f86d3;transform:scaleX(0.9789);">Recipe</div>
<div class="t" style="left:2667.33px;transform-origin:0 0;top:1122.84px;font-size:27px;line-height:34px;color:#2f86d3;transform:scaleX(0.9864);">Edit</div>
<div class="r" style="left:2770.3px;top:1137.3px;width:7.8px;height:7.8px;border-radius:50%;background:#2f86d3;"></div>
<div class="r" style="left:2782.3px;top:1137.3px;width:7.8px;height:7.8px;border-radius:50%;background:#2f86d3;"></div>
<div class="r" style="left:2794.3px;top:1137.3px;width:7.8px;height:7.8px;border-radius:50%;background:#2f86d3;"></div>
<div class="r" style="left:440px;top:1202px;width:2430px;height:2px;background:#ebebeb;"></div>
<div class="r th" style="left:498px;top:1230px;width:96px;height:70px;"><svg width="96" height="70" viewBox="0 0 96 70"><rect width="96" height="70" fill="#ffffff"/>
<ellipse cx="48.5" cy="36" rx="45.5" ry="33" fill="#5a5e66" opacity="0.5"/>
<ellipse cx="48" cy="35" rx="45" ry="32.5" fill="#eef1f7"/>
<ellipse cx="68.0" cy="34.0" rx="12" ry="4.2" transform="rotate(0 68.0 34.0)" fill="#d04232"/><ellipse cx="66.0" cy="40.1" rx="12" ry="4.2" transform="rotate(26 66.0 40.1)" fill="#f2efe8"/><ellipse cx="60.5" cy="44.9" rx="12" ry="4.2" transform="rotate(51 60.5 44.9)" fill="#6aaa3c"/><ellipse cx="52.5" cy="47.6" rx="12" ry="4.2" transform="rotate(77 52.5 47.6)" fill="#c83a2a"/><ellipse cx="43.5" cy="47.6" rx="12" ry="4.2" transform="rotate(103 43.5 47.6)" fill="#d04232"/><ellipse cx="35.5" cy="44.9" rx="12" ry="4.2" transform="rotate(129 35.5 44.9)" fill="#f2efe8"/><ellipse cx="30.0" cy="40.1" rx="12" ry="4.2" transform="rotate(154 30.0 40.1)" fill="#6aaa3c"/><ellipse cx="28.0" cy="34.0" rx="12" ry="4.2" transform="rotate(180 28.0 34.0)" fill="#c83a2a"/><ellipse cx="30.0" cy="27.9" rx="12" ry="4.2" transform="rotate(206 30.0 27.9)" fill="#d04232"/><ellipse cx="35.5" cy="23.1" rx="12" ry="4.2" transform="rotate(231 35.5 23.1)" fill="#f2efe8"/><ellipse cx="43.5" cy="20.4" rx="12" ry="4.2" transform="rotate(257 43.5 20.4)" fill="#6aaa3c"/><ellipse cx="52.5" cy="20.4" rx="12" ry="4.2" transform="rotate(283 52.5 20.4)" fill="#c83a2a"/><ellipse cx="60.5" cy="23.1" rx="12" ry="4.2" transform="rotate(309 60.5 23.1)" fill="#d04232"/><ellipse cx="66.0" cy="27.9" rx="12" ry="4.2" transform="rotate(334 66.0 27.9)" fill="#f2efe8"/><circle cx="62.9" cy="43.4" r="2.8" fill="#f4f0ea"/><circle cx="39.4" cy="26.0" r="2.4" fill="#c84030"/><circle cx="38.6" cy="23.9" r="2.7" fill="#d24a36"/><circle cx="73.8" cy="34.4" r="2.7" fill="#c84030"/><circle cx="50.0" cy="18.2" r="2.7" fill="#74b048"/><circle cx="54.1" cy="23.4" r="2.1" fill="#f4f0ea"/><circle cx="40.9" cy="36.3" r="2.7" fill="#d24a36"/><circle cx="57.1" cy="35.6" r="3.4" fill="#f4f0ea"/><circle cx="51.2" cy="21.3" r="2.1" fill="#c84030"/><circle cx="34.8" cy="20.9" r="2.0" fill="#d24a36"/><circle cx="70.2" cy="33.6" r="3.2" fill="#74b048"/><circle cx="64.6" cy="46.5" r="2.4" fill="#74b048"/><circle cx="39.4" cy="19.9" r="2.3" fill="#f4f0ea"/><circle cx="38.0" cy="28.2" r="2.5" fill="#f4f0ea"/><circle cx="62.5" cy="27.2" r="2.4" fill="#c84030"/><circle cx="51.5" cy="42.9" r="2.8" fill="#f4f0ea"/><circle cx="39.9" cy="39.8" r="2.6" fill="#f4f0ea"/><circle cx="37.5" cy="18.6" r="2.3" fill="#f4f0ea"/><circle cx="62.2" cy="42.7" r="3.0" fill="#f4f0ea"/><circle cx="65.1" cy="31.4" r="2.8" fill="#d24a36"/><circle cx="47.8" cy="47.2" r="3.3" fill="#f4f0ea"/><circle cx="45.6" cy="51.8" r="2.9" fill="#f4f0ea"/><circle cx="44.4" cy="38.5" r="2.3" fill="#d24a36"/><circle cx="42.6" cy="46.4" r="2.5" fill="#f4f0ea"/><circle cx="45.6" cy="18.5" r="2.3" fill="#f4f0ea"/><circle cx="35.3" cy="26.1" r="2.8" fill="#d24a36"/><circle cx="56.4" cy="40.3" r="3.0" fill="#d24a36"/><circle cx="66.4" cy="38.5" r="2.5" fill="#f4f0ea"/><circle cx="26.6" cy="30.7" r="0.5" fill="#b08a6a"/><circle cx="55.6" cy="52.2" r="0.6" fill="#b08a6a"/><circle cx="78.3" cy="35.9" r="0.7" fill="#b08a6a"/><circle cx="70.4" cy="44.9" r="0.7" fill="#b08a6a"/><circle cx="33.7" cy="41.1" r="0.4" fill="#b08a6a"/><circle cx="26.6" cy="23.8" r="0.6" fill="#b08a6a"/><circle cx="48.3" cy="56.8" r="0.4" fill="#b08a6a"/><circle cx="34.2" cy="40.5" r="0.4" fill="#b08a6a"/><circle cx="73.2" cy="35.4" r="0.8" fill="#b08a6a"/><circle cx="27.1" cy="43.0" r="0.7" fill="#b08a6a"/><circle cx="53.5" cy="24.8" r="0.5" fill="#b08a6a"/><circle cx="24.2" cy="17.0" r="0.7" fill="#b08a6a"/><circle cx="47.4" cy="32.1" r="0.7" fill="#b08a6a"/><circle cx="72.1" cy="43.4" r="0.5" fill="#b08a6a"/><circle cx="46.0" cy="53.2" r="0.4" fill="#b08a6a"/><circle cx="43.8" cy="22.0" r="0.6" fill="#b08a6a"/><circle cx="35.2" cy="12.9" r="0.8" fill="#b08a6a"/><circle cx="27.0" cy="15.6" r="0.5" fill="#b08a6a"/><circle cx="63.6" cy="54.0" r="0.7" fill="#b08a6a"/><circle cx="75.6" cy="26.9" r="0.5" fill="#b08a6a"/></svg></div>
<div class="clip" style="left:600px;top:1230px;width:378px;height:70px;">
<div class="t" style="left:12.95px;transform-origin:0 0;top:16.84px;font-size:27px;line-height:34px;color:#333333;transform:scaleX(0.9618);">Caprese</div>
</div>
<div class="t" style="left:993.03px;transform-origin:0 0;top:1246.84px;font-size:27px;line-height:34px;color:#333333;transform:scaleX(0.9714);">Salads</div>
<div class="r" style="left:1509px;top:1264.7px;width:20px;height:2.2000000000000455px;background:#333333;"></div>
<div class="t" style="right:1096.35px;transform-origin:100% 0;top:1246.84px;font-size:27px;line-height:34px;color:#333333;transform:scaleX(0.9802);">0.197 kg</div>
<div class="t" style="right:804.99px;transform-origin:100% 0;top:1248.09px;font-size:28px;line-height:35px;color:#d9650b;font-weight:700;transform:scaleX(0.9474);">$0.00</div>
<div class="t" style="right:654.59px;transform-origin:100% 0;top:1248.09px;font-size:28px;line-height:35px;color:#333333;font-weight:700;transform:scaleX(0.9489);">$5.00</div>
<div class="r" style="left:2435px;top:1264.7px;width:19px;height:2.2000000000000455px;background:#333333;"></div>
<div class="t" style="left:2528.15px;transform-origin:0 0;top:1246.84px;font-size:27px;line-height:34px;color:#2f86d3;transform:scaleX(0.9789);">Recipe</div>
<div class="t" style="left:2667.33px;transform-origin:0 0;top:1246.84px;font-size:27px;line-height:34px;color:#2f86d3;transform:scaleX(0.9864);">Edit</div>
<div class="r" style="left:2770.3px;top:1261.3px;width:7.8px;height:7.8px;border-radius:50%;background:#2f86d3;"></div>
<div class="r" style="left:2782.3px;top:1261.3px;width:7.8px;height:7.8px;border-radius:50%;background:#2f86d3;"></div>
<div class="r" style="left:2794.3px;top:1261.3px;width:7.8px;height:7.8px;border-radius:50%;background:#2f86d3;"></div>
<div class="r" style="left:440px;top:1326px;width:2430px;height:2px;background:#ebebeb;"></div>
<div class="r th" style="left:498px;top:1354px;width:96px;height:70px;"><svg width="96" height="70" viewBox="0 0 96 70"><rect width="96" height="70" fill="#d9cfc2"/>
<ellipse cx="49" cy="37" rx="47" ry="33" fill="#9c9890" opacity="0.6"/>
<path d="M2,38 Q0,12 30,5 Q52,0 72,6 Q96,16 95,36 Q94,60 64,68 Q40,72 18,64 Q3,56 2,38 Z" fill="#c99d72"/>
<path d="M10,37 Q10,18 34,12 Q52,8 70,13 Q88,22 86,38 Q84,56 60,60 Q40,63 24,58 Q10,50 10,37 Z" fill="#dcc1a0"/>
<circle cx="37.8" cy="49.4" r="1.9" fill="#4a2e20"/><circle cx="86.4" cy="21.5" r="1.8" fill="#4a2e20"/><circle cx="8.4" cy="41.4" r="1.6" fill="#5a3a28"/><circle cx="13.4" cy="46.1" r="1.5" fill="#7a5236"/><circle cx="54.7" cy="17.2" r="1.5" fill="#4a2e20"/><circle cx="62.2" cy="29.7" r="0.8" fill="#5a3a28"/><circle cx="35.2" cy="27.4" r="2.0" fill="#4a2e20"/><circle cx="56.8" cy="37.1" r="1.6" fill="#4a2e20"/><circle cx="59.1" cy="38.1" r="0.9" fill="#4a2e20"/><circle cx="49.5" cy="22.2" r="1.9" fill="#4a2e20"/><circle cx="56.8" cy="31.0" r="1.8" fill="#4a2e20"/><circle cx="61.5" cy="32.5" r="1.0" fill="#5a3a28"/><circle cx="89.9" cy="42.4" r="1.9" fill="#4a2e20"/><circle cx="80.5" cy="50.0" r="1.6" fill="#7a5236"/><circle cx="59.1" cy="41.7" r="1.7" fill="#5a3a28"/><circle cx="41.0" cy="53.3" r="1.1" fill="#7a5236"/><circle cx="47.0" cy="52.5" r="1.7" fill="#7a5236"/><circle cx="80.6" cy="21.5" r="1.5" fill="#7a5236"/><circle cx="68.6" cy="16.4" r="0.8" fill="#7a5236"/><circle cx="79.1" cy="40.4" r="0.9" fill="#7a5236"/><circle cx="38.9" cy="14.2" r="1.1" fill="#5a3a28"/><circle cx="27.0" cy="28.5" r="1.3" fill="#4a2e20"/><circle cx="59.4" cy="61.8" r="2.0" fill="#5a3a28"/><circle cx="40.2" cy="43.8" r="1.6" fill="#5a3a28"/><circle cx="81.2" cy="31.1" r="1.9" fill="#4a2e20"/><circle cx="45.2" cy="66.1" r="1.1" fill="#5a3a28"/><circle cx="67.6" cy="30.4" r="1.0" fill="#4a2e20"/><circle cx="51.2" cy="14.4" r="2.0" fill="#4a2e20"/><circle cx="56.0" cy="12.1" r="1.2" fill="#7a5236"/><circle cx="85.4" cy="23.3" r="1.7" fill="#7a5236"/>
<ellipse cx="48" cy="35" rx="34" ry="21" fill="#ebe1cf"/>
<circle cx="51.9" cy="33.0" r="1.3" fill="#5a3a26"/><circle cx="26.7" cy="41.4" r="1.2" fill="#8a6040"/><circle cx="58.7" cy="32.5" r="1.8" fill="#6e4a30"/><circle cx="37.4" cy="44.3" r="1.2" fill="#9a7050"/><circle cx="33.5" cy="20.3" r="1.2" fill="#9a7050"/><circle cx="41.9" cy="25.6" r="1.3" fill="#5a3a26"/><circle cx="18.7" cy="39.4" r="1.3" fill="#8a6040"/><circle cx="45.0" cy="52.3" r="2.2" fill="#8a6040"/><circle cx="42.7" cy="15.5" r="2.0" fill="#5a3a26"/><circle cx="57.7" cy="44.7" r="1.3" fill="#6e4a30"/><circle cx="61.3" cy="48.9" r="1.3" fill="#8a6040"/><circle cx="76.4" cy="33.2" r="2.0" fill="#9a7050"/><circle cx="46.4" cy="41.5" r="2.3" fill="#5a3a26"/><circle cx="53.4" cy="47.0" r="1.0" fill="#9a7050"/><circle cx="60.9" cy="24.5" r="1.3" fill="#5a3a26"/><circle cx="36.3" cy="36.7" r="1.8" fill="#9a7050"/><circle cx="63.7" cy="35.3" r="2.2" fill="#9a7050"/><circle cx="62.8" cy="21.5" r="1.9" fill="#8a6040"/><circle cx="37.0" cy="20.5" r="1.6" fill="#5a3a26"/><circle cx="46.4" cy="51.7" r="2.3" fill="#8a6040"/><circle cx="53.5" cy="18.5" r="1.9" fill="#5a3a26"/><circle cx="61.0" cy="23.7" r="1.0" fill="#9a7050"/><circle cx="22.2" cy="33.1" r="2.2" fill="#5a3a26"/><circle cx="51.5" cy="22.7" r="1.7" fill="#6e4a30"/><circle cx="70.9" cy="38.5" r="1.2" fill="#8a6040"/><circle cx="37.9" cy="34.2" r="1.8" fill="#8a6040"/><circle cx="43.3" cy="21.0" r="1.9" fill="#5a3a26"/><circle cx="27.7" cy="33.3" r="2.3" fill="#8a6040"/><circle cx="61.7" cy="34.5" r="1.7" fill="#6e4a30"/><circle cx="44.7" cy="19.5" r="1.9" fill="#5a3a26"/><circle cx="44.9" cy="47.5" r="1.0" fill="#9a7050"/><circle cx="69.9" cy="27.0" r="1.9" fill="#5a3a26"/><circle cx="61.6" cy="42.0" r="1.6" fill="#8a6040"/><circle cx="79.3" cy="34.3" r="1.6" fill="#8a6040"/><circle cx="67.4" cy="47.8" r="1.4" fill="#2e5a22"/><circle cx="57.0" cy="50.0" r="1.3" fill="#3a6e2a"/><circle cx="32.6" cy="47.7" r="1.4" fill="#4a8232"/><circle cx="31.0" cy="37.2" r="1.2" fill="#3a6e2a"/><circle cx="52.1" cy="21.5" r="1.4" fill="#3a6e2a"/><circle cx="45.9" cy="47.2" r="0.9" fill="#4a8232"/><circle cx="38.4" cy="22.5" r="1.4" fill="#4a8232"/><circle cx="31.8" cy="47.6" r="1.0" fill="#4a8232"/><circle cx="25.0" cy="41.9" r="1.3" fill="#4a8232"/><circle cx="58.1" cy="44.0" r="1.0" fill="#3a6e2a"/><circle cx="62.3" cy="18.2" r="1.4" fill="#3a6e2a"/><circle cx="29.5" cy="32.8" r="1.2" fill="#2e5a22"/><circle cx="79.1" cy="36.4" r="1.3" fill="#4a8232"/><circle cx="29.1" cy="25.4" r="1.5" fill="#3a6e2a"/><circle cx="51.1" cy="23.4" r="0.8" fill="#4a8232"/><circle cx="51.4" cy="27.1" r="1.5" fill="#2e5a22"/><circle cx="57.5" cy="34.1" r="1.5" fill="#2e5a22"/><circle cx="54.9" cy="17.2" r="0.9" fill="#2e5a22"/><circle cx="50.1" cy="40.5" r="1.5" fill="#2e5a22"/><circle cx="65.7" cy="25.0" r="0.9" fill="#3a6e2a"/><circle cx="58.2" cy="22.8" r="1.2" fill="#4a8232"/><circle cx="36.1" cy="36.6" r="1.1" fill="#4a8232"/><circle cx="60.7" cy="48.3" r="1.4" fill="#3a6e2a"/><circle cx="59.8" cy="23.5" r="1.2" fill="#2e5a22"/><circle cx="41.7" cy="48.1" r="1.1" fill="#2e5a22"/><circle cx="70.7" cy="42.3" r="1.3" fill="#3a6e2a"/><circle cx="54.8" cy="35.6" r="1.4" fill="#4a8232"/><circle cx="51.5" cy="29.3" r="1.1" fill="#3a6e2a"/><circle cx="74.5" cy="38.6" r="1.3" fill="#4a8232"/><circle cx="69.5" cy="44.1" r="1.0" fill="#2e5a22"/><circle cx="21.0" cy="28.9" r="0.9" fill="#e8b848"/><circle cx="28.3" cy="41.6" r="1.2" fill="#e8b848"/><circle cx="35.1" cy="45.5" r="0.9" fill="#e8b848"/><circle cx="60.3" cy="27.0" r="0.8" fill="#e8b848"/><circle cx="52.5" cy="24.4" r="0.9" fill="#e8b848"/><circle cx="68.6" cy="48.5" r="0.8" fill="#e8b848"/><circle cx="30.0" cy="43.4" r="0.9" fill="#e8b848"/><circle cx="40.1" cy="38.7" r="0.7" fill="#e8b848"/><circle cx="29.1" cy="25.3" r="1.2" fill="#e8b848"/><circle cx="30.4" cy="24.9" r="1.1" fill="#e8b848"/></svg></div>
<div class="clip" style="left:600px;top:1354px;width:378px;height:70px;">
<div class="t" style="left:12.96px;transform-origin:0 0;top:16.84px;font-size:27px;line-height:34px;color:#333333;transform:scaleX(0.9559);">Carpathian Pizza</div>
</div>
<div class="t" style="left:992.12px;transform-origin:0 0;top:1370.84px;font-size:27px;line-height:34px;color:#333333;transform:scaleX(0.9451);">Pizza</div>
<div class="r" style="left:1509px;top:1388.7px;width:20px;height:2.2000000000000455px;background:#333333;"></div>
<div class="t" style="right:1096.35px;transform-origin:100% 0;top:1370.84px;font-size:27px;line-height:34px;color:#333333;transform:scaleX(0.9802);">0.000 kg</div>
<div class="t" style="right:804.99px;transform-origin:100% 0;top:1372.09px;font-size:28px;line-height:35px;color:#d9650b;font-weight:700;transform:scaleX(0.9474);">$0.00</div>
<div class="t" style="right:654.63px;transform-origin:100% 0;top:1372.09px;font-size:28px;line-height:35px;color:#333333;font-weight:700;transform:scaleX(0.9417);">$10.00</div>
<div class="r" style="left:2435px;top:1388.7px;width:19px;height:2.2000000000000455px;background:#333333;"></div>
<div class="t" style="left:2528.15px;transform-origin:0 0;top:1370.84px;font-size:27px;line-height:34px;color:#2f86d3;transform:scaleX(0.9789);">Recipe</div>
<div class="t" style="left:2667.33px;transform-origin:0 0;top:1370.84px;font-size:27px;line-height:34px;color:#2f86d3;transform:scaleX(0.9864);">Edit</div>
<div class="r" style="left:2770.3px;top:1385.3px;width:7.8px;height:7.8px;border-radius:50%;background:#2f86d3;"></div>
<div class="r" style="left:2782.3px;top:1385.3px;width:7.8px;height:7.8px;border-radius:50%;background:#2f86d3;"></div>
<div class="r" style="left:2794.3px;top:1385.3px;width:7.8px;height:7.8px;border-radius:50%;background:#2f86d3;"></div>
<div class="r" style="left:440px;top:1450px;width:2430px;height:2px;background:#ebebeb;"></div>
<svg class="icons" width="2880" height="1484" viewBox="0 0 2880 1484">
<defs><clipPath id="avc"><circle cx="48" cy="1438" r="24"/></clipPath></defs>
<!-- chevron -->
<polyline points="49.9,47.8 38,60 49.9,72" fill="none" stroke="#bdbdbd" stroke-width="3.6" stroke-linecap="round" stroke-linejoin="round"/>
<!-- lamp -->
<g fill="none" stroke="#3a87de" stroke-width="3" stroke-linecap="round" stroke-linejoin="round">
<path d="M373.2,50 L390.8,50 Q393.6,50 394.3,52.6 L397,61 Q397.8,63.7 395,63.7 L369,63.7 Q366.2,63.7 367,61 L369.7,52.6 Q370.4,50 373.2,50 Z"/>
<path d="M378,64 L378,76 M386,64 L386,76 M371,76 L393,76"/>
</g>
<!-- sidebar icons -->
<g fill="none" stroke="#9a9a9a" stroke-linecap="round" stroke-linejoin="round">
<path d="M36,190.2 L36,197.8 M44,186 L44,197.8 M52,178 L52,197.8 M60,166.2 L60,197.8" stroke-width="4"/>
<path d="M55.3,248.3 C52,247.6 49,247.5 47,247.6 C42,247.8 40.4,250 40.4,252.8 C40.4,256.5 42.5,258.2 47,258.2 L49,258.2 C53.5,258.2 55.4,260 55.4,263.4 C55.4,266.8 53,268.5 48,268.6 C45,268.7 42,268.4 39.3,267.8" stroke-width="3.6" stroke-linecap="butt"/>
<path d="M36,1007 L48,1000 L60.2,1007 L48,1013.8 Z M36,1014 L48,1020.8 L60.2,1014 M36,1021 L48,1028.2 L60.2,1021" stroke-width="3.6"/>
<path d="M46.2,1080.4 A9.8,9.8 0 1 0 54.3,1097.4" stroke-width="3.6"/>
<path d="M48,1076.3 L48,1090 L57.3,1099.5 A13.1,13.1 0 0 0 48,1076.3 Z" stroke-width="3.6"/>
<path d="M39.5,1165.9 L56.5,1165.9 Q57.9,1165.9 57.9,1167.3 L57.9,1174.8 Q57.9,1179.8 52.9,1179.8 L43.1,1179.8 Q38.1,1179.8 38.1,1174.8 L38.1,1167.3 Q38.1,1165.9 39.5,1165.9 Z" stroke-width="3.6"/>
<path d="M39.9,1165 L39.9,1158.1 A8,8 0 0 1 55.9,1158.1" stroke-width="3.6"/>
<g stroke-width="3.5"><rect x="35.8" y="1230" width="8.2" height="8.2" rx="1.5"/><rect x="52" y="1230" width="8.2" height="8.2" rx="1.5"/><rect x="35.8" y="1246" width="8.2" height="8.2" rx="1.5"/><rect x="52" y="1246" width="8.2" height="8.2" rx="1.5"/></g>
<circle cx="47.9" cy="1317.9" r="7.5" stroke-width="3"/>
<path d="M47.9,1309.9 L47.9,1305.4 M47.9,1325.9 L47.9,1330.4 M39.9,1317.9 L35.4,1317.9 M55.9,1317.9 L60.4,1317.9 M42.2,1312.2 L39,1309 M53.6,1312.2 L56.8,1309 M42.2,1323.6 L39,1326.8 M53.6,1323.6 L56.8,1326.8" stroke-width="3.8"/>
</g>
<g fill="#9a9a9a">
<rect x="46.1" y="242.2" width="3.6" height="4.5"/><rect x="46.1" y="269.5" width="3.6" height="4.3"/>
<ellipse cx="47.9" cy="1173" rx="1.9" ry="2.8"/>
<circle cx="47.9" cy="1317.9" r="1.9"/>
</g>
<!-- document icon -->
<path d="M40,320 L52,320 L58,326 L58,346 Q58,347.8 56.2,347.8 L39.9,347.8 Q38.1,347.8 38.1,346 L38.1,321.8 Q38.1,320 40,320 Z" fill="none" stroke="#333" stroke-width="4" stroke-linejoin="round"/>
<g fill="#333"><rect x="42.3" y="326.4" width="7.6" height="3.1" rx="1.5"/><rect x="42.3" y="332.2" width="11.6" height="3.2" rx="1.5"/><rect x="42.3" y="338.4" width="11.6" height="3.2" rx="1.5"/></g>
<polygon points="182.8,336 193.1,336 188,342.2" fill="#666"/>
<!-- avatar -->
<circle cx="48" cy="1438" r="24" fill="#e8e8e8"/>
<g clip-path="url(#avc)" fill="#9c9c9c"><circle cx="48" cy="1431.8" r="8.9"/><ellipse cx="48" cy="1458.5" rx="16.5" ry="14.5"/></g>
<polygon points="185,1440.5 194.5,1440.5 189.75,1445.5" fill="#999"/>
<!-- header icons -->
<g fill="none" stroke="#4088dc" stroke-linecap="round" stroke-linejoin="round" stroke-width="3.6">
<path d="M1720,45.9 L1739.9,45.9"/>
<path d="M1720,51.9 L1739.9,51.9 L1737.6,72.5 Q1737.2,76 1733.5,76 L1726.4,76 Q1722.7,76 1722.3,72.5 Z"/>
<rect x="1895" y="46" width="32" height="29.9" rx="2" stroke-width="3.8"/>
<path d="M1905,46 L1905,75.9 M1895,55.9 L1927,55.9 M1895,65.9 L1927,65.9" stroke-width="3.8"/>
<path d="M2150,43 L2150,66 M2145,47 L2150,42 L2155,47" stroke-width="3.7"/>
<path d="M2143,57.9 L2142.2,57.9 Q2139.85,57.9 2139.85,60.5 L2139.85,72.5 Q2139.85,75.85 2143.2,75.85 L2156.7,75.85 Q2160.05,75.85 2160.05,72.5 L2160.05,60.5 Q2160.05,57.9 2157.6,57.9 L2156.9,57.9" stroke-width="3.7"/>
<path d="M2363,42 L2363,64 M2358,59.8 L2363,64.7 L2368,59.8" stroke-width="3.7"/>
<path d="M2355,52 L2353.2,52 Q2350.9,52 2350.9,54.6 L2350.9,70.5 Q2350.9,73.8 2354.2,73.8 L2371.8,73.8 Q2375.1,73.8 2375.1,70.5 L2375.1,54.6 Q2375.1,52 2372.8,52 L2371,52" stroke-width="3.7"/>
<rect x="2540" y="62" width="36" height="16" rx="5" stroke-width="3.7"/>
<path d="M2548,62 L2548,46.8 Q2548,44 2550.8,44 L2558,44 L2567.9,54 L2567.9,62 M2558,44 L2558,50.5 Q2558,54 2561.5,54 L2567.9,54" stroke-width="3.7"/>
<path d="M2548,70 L2554,70" stroke-width="3.7"/>
</g>
<g fill="#4189dd"><ellipse cx="1729.9" cy="44.6" rx="3.3" ry="2.6"/>
<polygon points="2057,58.5 2067,58.5 2062,64"/><polygon points="2270,58.5 2280,58.5 2275,64"/>
<polygon points="985.9,188 996.2,188 991,193.8"/><polygon points="1153.5,188 1163.5,188 1158.5,193.8"/><polygon points="1611.8,188.5 1621.7,188.5 1616.8,194.5"/>
</g>
<!-- search -->
<g fill="none" stroke="#9a9a9a" stroke-linecap="round"><circle cx="518.1" cy="187.6" r="9.7" stroke-width="4"/><path d="M509.8,194.6 L505.3,200.3" stroke-width="3.8"/></g>
<polygon points="549.8,293.9 564.8,293.9 557.3,285.6" fill="#9a9a9a"/>
</svg>

<div class="fade"></div>
</div>
</body></html>
